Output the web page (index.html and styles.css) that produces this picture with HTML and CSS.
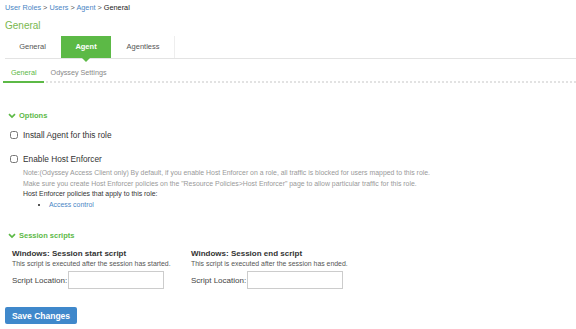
FILE: index.html
```html
<!DOCTYPE html>
<html lang="en">
<head>
    <meta charset="UTF-8">
    <title>General</title>
    <link rel="stylesheet" href="styles.css">
</head>
<body>
    <div class="breadcrumb">
        <a href="#">User Roles</a> &gt; <a href="#">Users</a> &gt; <a href="#">Agent</a> &gt; <span class="current">General</span>
    </div>
    <h2 class="page-title">General</h2>

    <div class="tabs">
        <a class="tab" href="#">General</a>
        <a class="tab active" href="#">Agent</a>
        <a class="tab last" href="#">Agentless</a>
    </div>

    <div class="subtabs">
        <a class="subtab active" href="#">General</a>
        <a class="subtab" href="#">Odyssey Settings</a>
    </div>

    <div class="section">
        <div class="section-title">
            <svg class="chevron" viewBox="0 0 10 8" width="8" height="6"><path d="M1 1.5 L5 5.5 L9 1.5" fill="none" stroke="#5cb946" stroke-width="2.2"/></svg>
            Options
        </div>
        <div class="check-row">
            <input type="checkbox" id="installAgent">
            <label for="installAgent">Install Agent for this role</label>
        </div>
        <div class="check-row second">
            <input type="checkbox" id="hostEnforcer">
            <label for="hostEnforcer">Enable Host Enforcer</label>
        </div>
        <div class="note">
            <p>Note:(Odyssey Access Client only) By default, if you enable Host Enforcer on a role, all traffic is blocked for users mapped to this role.</p>
            <p>Make sure you create Host Enforcer policies on the "Resource Policies&gt;Host Enforcer" page to allow particular traffic for this role.</p>
            <p class="dark">Host Enforcer policies that apply to this role:</p>
            <ul>
                <li><a href="#">Access control</a></li>
            </ul>
        </div>
    </div>

    <div class="section scripts">
        <div class="section-title">
            <svg class="chevron" viewBox="0 0 10 8" width="8" height="6"><path d="M1 1.5 L5 5.5 L9 1.5" fill="none" stroke="#5cb946" stroke-width="2.2"/></svg>
            Session scripts
        </div>
        <div class="script-cols">
            <div class="script-col">
                <h4>Windows: Session start script</h4>
                <p class="hint">This script is executed after the session has started.</p>
                <div class="field">
                    <label for="startScript">Script Location:</label>
                    <input type="text" id="startScript">
                </div>
            </div>
            <div class="script-col">
                <h4>Windows: Session end script</h4>
                <p class="hint">This script is executed after the session has ended.</p>
                <div class="field">
                    <label for="endScript">Script Location:</label>
                    <input type="text" id="endScript">
                </div>
            </div>
        </div>
    </div>

    <button class="save" type="button">Save Changes</button>
</body>
</html>
```

FILE: styles.css
```css
body {
    font-family: "Liberation Sans", Arial, sans-serif;
    margin: 0;
    padding: 2px 0 0 5px;
    background-color: #fff;
    color: #333;
    font-size: 9px;
}
a {
    text-decoration: none;
    color: #4a86c5;
}
.breadcrumb {
    font-size: 7.3px;
    line-height: 11px;
    color: #555;
}
.breadcrumb .current {
    color: #222;
}
.page-title {
    margin: 6px 0 0;
    font-size: 10px;
    font-weight: normal;
    line-height: 14px;
    color: #7ab850;
}
.tabs {
    display: flex;
    margin-top: 3px;
    height: 22px;
    border-bottom: 1px solid #e3e3e3;
}
.tab {
    width: 55px;
    line-height: 22px;
    text-align: center;
    color: #555;
    font-size: 7.5px;
}
.tab.active {
    position: relative;
    width: 50px;
    margin-left: 1px;
    background-color: #5cb946;
    color: #fff;
    font-weight: bold;
}
.tab.active::after {
    content: "";
    position: absolute;
    left: 21px;
    bottom: -4px;
    border-left: 4px solid transparent;
    border-right: 4px solid transparent;
    border-top: 4px solid #5cb946;
}
.tab.last {
    width: 62px;
    margin-left: 1px;
    border-right: 1px solid #eee;
}
.subtabs {
    display: flex;
    margin: 6px 0 0 -2px;
    height: 16px;
    border-bottom: 2px dotted #e2e2e2;
}
.subtab {
    padding: 0 7px;
    line-height: 16px;
    color: #888;
    font-size: 7.2px;
}
.subtab.active {
    color: #5cb946;
    box-shadow: inset 0 -2px 0 #5cb946;
    margin-bottom: -2px;
    height: 18px;
    padding: 0 7px 0 8px;
}
.section {
    margin-top: 28px;
    padding-left: 3px;
}
.section-title {
    display: flex;
    align-items: center;
    gap: 3px;
    color: #5cb946;
    font-size: 7.5px;
    font-weight: bold;
    line-height: 10px;
}
.check-row {
    display: flex;
    align-items: center;
    margin: 8px 0 0 2px;
    font-size: 8.3px;
    line-height: 12px;
}
.check-row.second {
    margin-top: 12px;
}
.check-row input {
    width: 8px;
    height: 8px;
    margin: 0 5px 0 0;
}
.note {
    margin-left: 15px;
    margin-top: 3px;
    font-size: 6.9px;
    line-height: 10.5px;
    color: #999;
}
.note p {
    margin: 0;
}
.note .dark {
    color: #333;
}
.note ul {
    margin: 0;
    padding-left: 26px;
    list-style: square;
    color: #555;
}
.note li a {
    font-size: 6.9px;
}
.scripts {
    margin-top: 21px;
}
.script-cols {
    display: flex;
    margin-top: 8px;
    padding-left: 4px;
}
.script-col {
    width: 179px;
}
.script-col h4 {
    margin: 0;
    font-size: 8px;
    line-height: 10px;
    color: #333;
}
.hint {
    margin: 0;
    font-size: 6.9px;
    line-height: 9px;
    color: #555;
}
.field {
    display: flex;
    align-items: center;
    margin-top: 3px;
    font-size: 8px;
    color: #444;
}
.field input {
    width: 96px;
    height: 18px;
    margin: 0 0 0 1px;
    padding: 0;
    border: 1px solid #ccc;
    box-sizing: border-box;
}
.save {
    display: block;
    margin-top: 18px;
    width: 72px;
    height: 17px;
    padding: 0;
    border: none;
    border-radius: 2px;
    background-color: #3f88cb;
    color: #fff;
    font-family: "Liberation Sans", Arial, sans-serif;
    font-size: 8.5px;
    font-weight: bold;
    cursor: pointer;
}
```
